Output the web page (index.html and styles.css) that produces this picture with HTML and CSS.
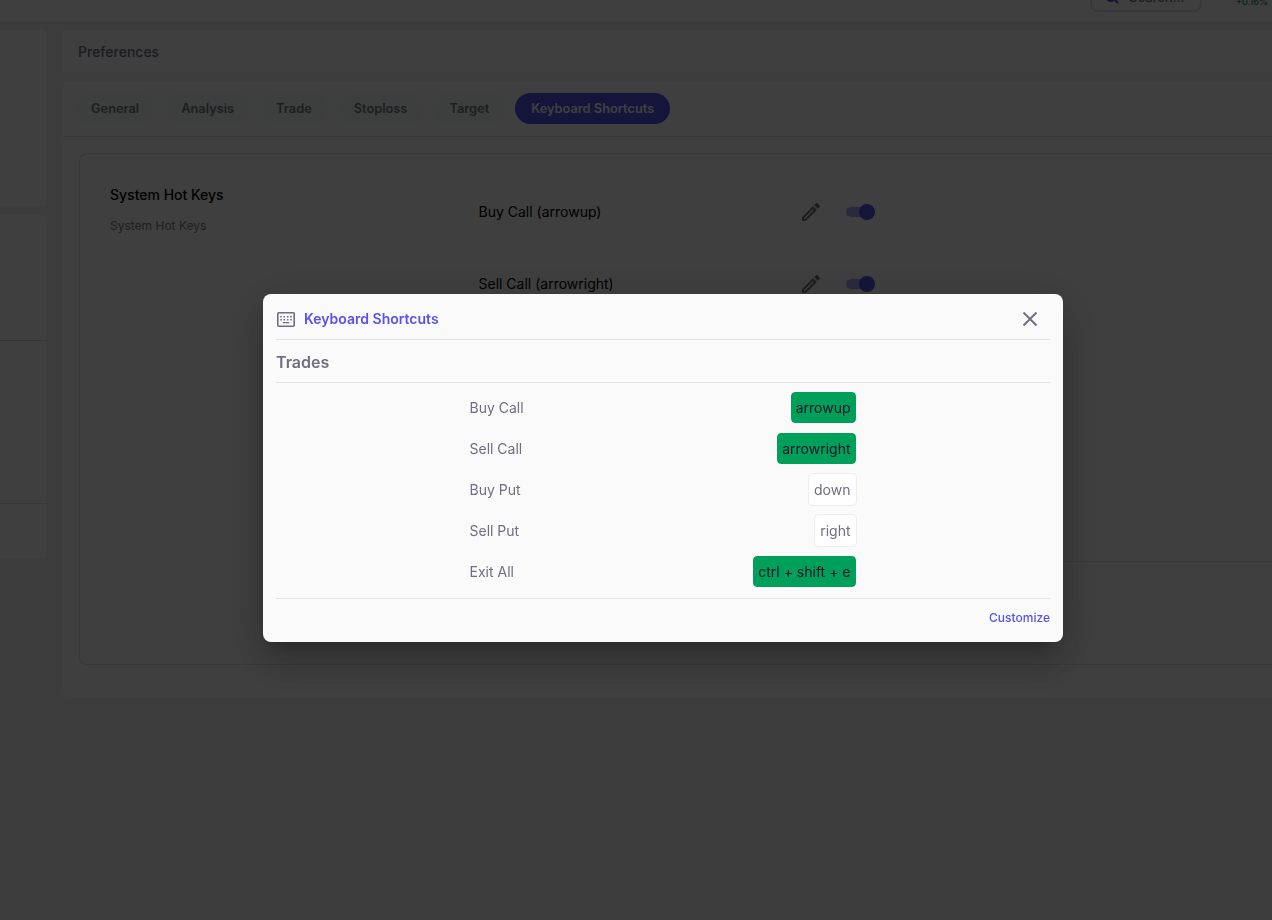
FILE: index.html
```html
<!DOCTYPE html>
<html lang="en">
<head>
  <meta charset="UTF-8">
  <meta name="viewport" content="width=device-width, initial-scale=1.0">
  <title>Preferences</title>
  <link rel="stylesheet" href="styles.css">
</head>
<body>

<!-- Top bar -->
<header class="topbar">
  <div class="search-button">
    <svg class="search-icon" width="16" height="16" viewBox="0 0 16 16">
      <circle cx="7" cy="7" r="5"></circle>
      <path d="M11 11l3 3"></path>
    </svg>
    <span>Search...</span>
  </div>
  <div class="ticker">+0.16%</div>
</header>

<div class="layout">
  <!-- Sidebar -->
  <aside class="sidebar">
    <div class="side-card side-profile"></div>
    <div class="side-card">
      <div class="side-block side-block-top"></div>
      <div class="side-block side-block-middle"></div>
      <div class="side-block side-block-bottom"></div>
    </div>
  </aside>

  <!-- Content -->
  <main class="content">
    <h1 class="page-title">Preferences</h1>

    <section class="panel">
      <nav class="tabs">
        <a class="tab">General</a>
        <a class="tab">Analysis</a>
        <a class="tab">Trade</a>
        <a class="tab">Stoploss</a>
        <a class="tab">Target</a>
        <a class="tab active">Keyboard Shortcuts</a>
      </nav>

      <div class="settings-box">
        <div class="settings-info">
          <h2>System Hot Keys</h2>
          <p>System Hot Keys</p>
        </div>
        <div class="settings-list">
          <div class="hotkey-row">
            <span class="hotkey-name">Buy Call (arrowup)</span>
            <svg class="edit-icon" width="24" height="24" viewBox="0 0 24 24">
              <path d="M14.06 9.02l.92.92L5.92 19H5v-.92l9.06-9.06M17.66 3c-.25 0-.51.1-.7.29l-1.83 1.83 3.75 3.75 1.83-1.83c.39-.39.39-1.02 0-1.41l-2.34-2.34c-.2-.2-.45-.29-.71-.29zm-3.6 3.19L3 17.25V21h3.75L17.81 9.94l-3.75-3.75z"></path>
            </svg>
            <span class="switch"></span>
          </div>
          <div class="hotkey-row">
            <span class="hotkey-name">Sell Call (arrowright)</span>
            <svg class="edit-icon" width="24" height="24" viewBox="0 0 24 24">
              <path d="M14.06 9.02l.92.92L5.92 19H5v-.92l9.06-9.06M17.66 3c-.25 0-.51.1-.7.29l-1.83 1.83 3.75 3.75 1.83-1.83c.39-.39.39-1.02 0-1.41l-2.34-2.34c-.2-.2-.45-.29-.71-.29zm-3.6 3.19L3 17.25V21h3.75L17.81 9.94l-3.75-3.75z"></path>
            </svg>
            <span class="switch"></span>
          </div>
        </div>
      </div>
    </section>
  </main>
</div>

<!-- Shortcuts Popup -->
<div class="overlay">
  <div class="dialog">
    <div class="dialog-header">
      <svg class="keyboard-icon" width="20" height="20" viewBox="0 0 20 20">
        <rect class="frame" x="1.8" y="3.8" width="16.4" height="13.4" rx="1"></rect>
        <path d="M4.2 7h1.6v1.6H4.2zM7.5 7h1.6v1.6H7.5zM10.9 7h1.6v1.6h-1.6zM14.2 7h1.6v1.6h-1.6zM4.2 10h1.6v1.6H4.2zM7.5 10h1.6v1.6H7.5zM10.9 10h1.6v1.6h-1.6zM14.2 10h1.6v1.6h-1.6zM6.7 13h6.6v1.2H6.7z"></path>
      </svg>
      <h3>Keyboard Shortcuts</h3>
      <svg class="close-icon" width="16" height="16" viewBox="0 0 16 16">
        <path d="M1.5 1.5l13 13M14.5 1.5l-13 13"></path>
      </svg>
    </div>

    <h4 class="group-title">Trades</h4>

    <div class="shortcuts">
      <div class="shortcut">
        <span>Buy Call</span>
        <span class="key custom">arrowup</span>
      </div>
      <div class="shortcut">
        <span>Sell Call</span>
        <span class="key custom">arrowright</span>
      </div>
      <div class="shortcut">
        <span>Buy Put</span>
        <span class="key">down</span>
      </div>
      <div class="shortcut">
        <span>Sell Put</span>
        <span class="key">right</span>
      </div>
      <div class="shortcut">
        <span>Exit All</span>
        <span class="key custom">ctrl + shift + e</span>
      </div>
    </div>

    <div class="dialog-footer">
      <a>Customize</a>
    </div>
  </div>
</div>

</body>
</html>
```
FILE: styles.css
```css
* {
  box-sizing: border-box;
}

body {
  margin: 0;
  height: 920px;
  overflow: hidden;
  font-family: Inter, sans-serif;
  font-size: 14px;
  color: #716d82;
  background-color: #f0f0f0;
}

h1, h2, h3, h4, p {
  margin: 0;
}

/* Top bar, scrolled partly out of view */
.topbar {
  display: flex;
  justify-content: flex-end;
  align-items: flex-end;
  height: 21px;
  padding: 0 4px 9px 0;
  overflow: hidden;
  background-color: #fafafa;
}

.search-button {
  display: flex;
  align-items: center;
  gap: 9px;
  flex-shrink: 0;
  width: 112px;
  height: 32px;
  margin-right: 34px;
  padding: 1px 12px 0;
  border: 2px solid #dedee0;
  border-radius: 8px;
  font-size: 13px;
  line-height: 16px;
  font-weight: 500;
  color: #77777c;
}

.search-icon {
  flex-shrink: 0;
  fill: none;
  stroke: #4f46e5;
  stroke-width: 2;
}

.ticker {
  flex-shrink: 0;
  width: 32px;
  margin-bottom: 4px;
  font-size: 9px;
  line-height: 12px;
  font-weight: 500;
  color: #00a05a;
}

.layout {
  display: flex;
  align-items: flex-start;
  gap: 16px;
  padding-top: 9px;
}

/* Sidebar */
.sidebar {
  width: 47px;
}

.side-card {
  border-radius: 0 6px 6px 0;
  background-color: #fafafa;
}

.side-profile {
  height: 177px;
  margin-bottom: 8px;
}

.side-block-top {
  height: 126px;
  border-bottom: 1px solid #d4d4e0;
}

.side-block-middle {
  height: 163px;
  border-bottom: 1px solid #d9d9d9;
}

.side-block-bottom {
  height: 55px;
}

/* Content */
.content {
  flex: 1;
  min-width: 0;
}

.page-title {
  height: 42px;
  padding-left: 15px;
  margin-bottom: 9px;
  font-size: 14px;
  line-height: 43px;
  font-weight: 500;
  background-color: #fafafa;
}

.panel {
  height: 616px;
  border-radius: 6px 0 0 6px;
  background-color: #fafafa;
}

.tabs {
  display: flex;
  align-items: center;
  gap: 10px;
  height: 56px;
  padding: 0 12px;
  border-bottom: 1px solid #dcdcdc;
}

.tab {
  height: 31px;
  padding: 0 16px;
  border-radius: 16px;
  font-size: 12.8px;
  line-height: 32px;
  font-weight: 600;
  white-space: nowrap;
  color: #77777c;
  background-color: #f1f5f8;
}

.tab.active {
  color: #fafafa;
  background-color: #5552e8;
}

.settings-box {
  display: flex;
  height: 512px;
  margin: 16px 0 0 16px;
  padding-left: 30px;
  border: 1px solid #dfdfdf;
  border-right: none;
  border-radius: 8px 0 0 8px;
}

.settings-info {
  width: 368.5px;
  padding-top: 32px;
}

.settings-info h2 {
  font-size: 14px;
  line-height: 18px;
  font-weight: 500;
  color: #000;
}

.settings-info p {
  margin-top: 14px;
  font-size: 12px;
  line-height: 16px;
  color: #808080;
}

.settings-list {
  flex: 1;
  height: 408px;
  padding-top: 22px;
  border-bottom: 1px solid #e4e4e4;
}

.hotkey-row {
  display: flex;
  align-items: center;
  height: 72px;
  color: #000;
}

.hotkey-name {
  width: 320.5px;
  padding-bottom: 2px;
}

.edit-icon {
  fill: #757575;
}

.switch {
  display: flex;
  align-items: center;
  justify-content: flex-end;
  width: 26px;
  height: 10px;
  margin-left: 23px;
  border-radius: 5px;
  background-color: #a9a8f2;
}

.switch::after {
  content: "";
  flex-shrink: 0;
  width: 16px;
  height: 16px;
  margin-right: -3px;
  border-radius: 50%;
  background-color: #5552e8;
}

/* Shortcuts Popup */
.overlay {
  position: fixed;
  top: 0;
  left: 0;
  width: 100%;
  height: 100%;
  padding: 294px 0 0 263px;
  background-color: rgba(0, 0, 0, 0.75);
}

.dialog {
  width: 800px;
  height: 348px;
  padding: 0 13px;
  border-radius: 8px;
  background-color: #fafafa;
  box-shadow: 0 11px 15px -7px rgba(0, 0, 0, 0.2),
    0 24px 38px 3px rgba(0, 0, 0, 0.14),
    0 9px 46px 8px rgba(0, 0, 0, 0.12);
}

.dialog-header {
  display: flex;
  align-items: center;
  height: 46px;
  padding: 4px 12px 0 0;
  border-bottom: 1px solid #e2e2ea;
}

.dialog-header h3 {
  flex: 1;
  margin-left: 8px;
  font-size: 14px;
  font-weight: 600;
  color: #5552ee;
}

.keyboard-icon {
  fill: #716d82;
}

.keyboard-icon .frame {
  fill: none;
  stroke: #716d82;
  stroke-width: 1.6;
}

.close-icon {
  fill: none;
  stroke: #716d82;
  stroke-width: 2;
}

.group-title {
  height: 43px;
  font-size: 16px;
  line-height: 45px;
  font-weight: 600;
  border-bottom: 1px solid #e2e2ea;
}

.shortcuts {
  height: 216px;
  padding-top: 4px;
  border-bottom: 1px solid #e4e4e6;
}

.shortcut {
  display: flex;
  align-items: center;
  justify-content: space-between;
  width: 50%;
  height: 41px;
  margin: 0 auto;
}

.key {
  height: 33px;
  padding: 0 5px;
  border: 1px solid #ededf0;
  border-radius: 5px;
  line-height: 31px;
  background-color: #fff;
}

.key.custom {
  color: #14142b;
  border-color: #fafafa;
  background-color: #00a05a;
  background-clip: padding-box;
}

.dialog-footer {
  text-align: right;
  font-size: 12px;
  line-height: 38px;
  font-weight: 500;
  color: #5552ee;
}
```
